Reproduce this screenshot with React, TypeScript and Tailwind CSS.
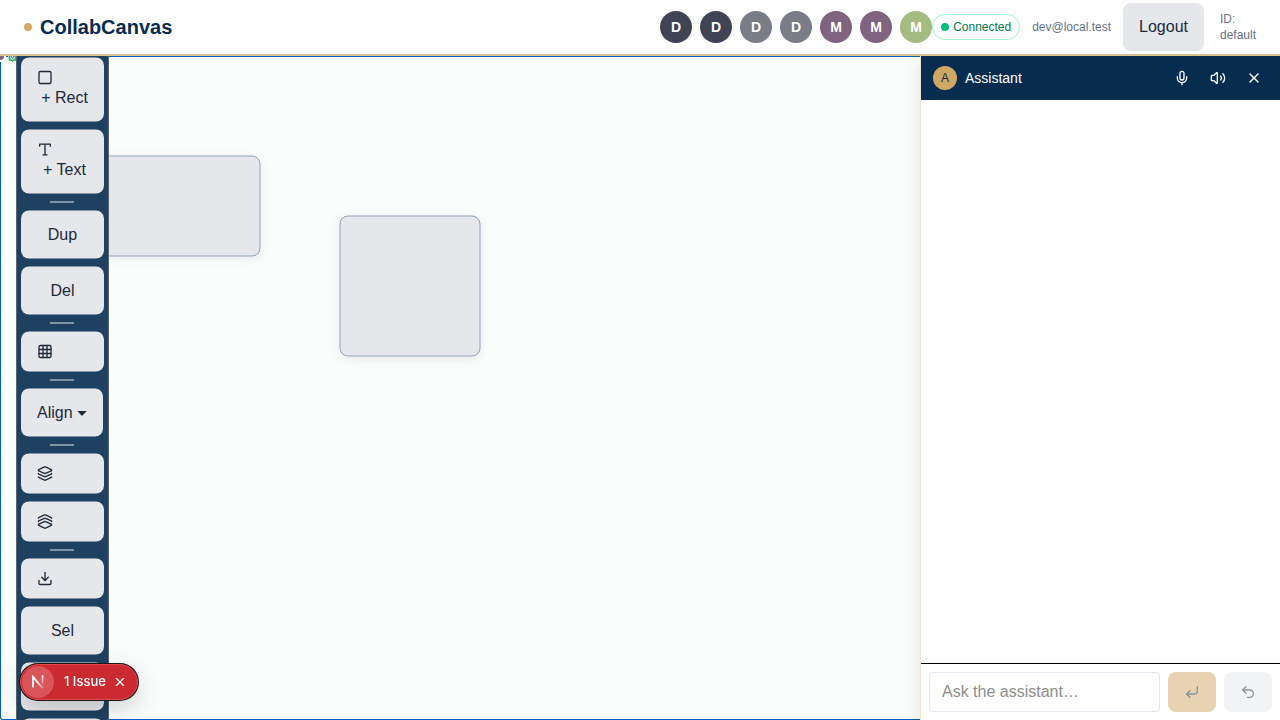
import type { ReactNode } from 'react';
import {
  CornerDownLeft,
  Download,
  Grid3x3,
  Layers,
  Mic,
  MousePointer2,
  Square,
  Undo2,
  Volume2,
  X,
} from 'lucide-react';

const peers = [
  { initial: 'D', tone: 'bg-[#404353]' },
  { initial: 'D', tone: 'bg-[#404353]' },
  { initial: 'D', tone: 'bg-[#7a7c87]' },
  { initial: 'D', tone: 'bg-[#7a7c87]' },
  { initial: 'M', tone: 'bg-[#80647f]' },
  { initial: 'M', tone: 'bg-[#80647f]' },
  { initial: 'M', tone: 'bg-[#a4bb82]' },
];

function TextIcon() {
  return (
    <svg
      width="16"
      height="16"
      viewBox="0 0 24 24"
      fill="none"
      stroke="currentColor"
      strokeWidth="2"
      strokeLinecap="round"
      strokeLinejoin="round"
      aria-hidden="true"
    >
      <path d="M4 7V4h16v3M9 20h6M12 4v16" />
    </svg>
  );
}

function Header() {
  return (
    <header className="z-20 flex shrink-0 items-center justify-between border-b-2 border-[#dcc193] bg-white px-6 py-[3px]">
      <div className="flex items-center gap-2">
        <span className="size-2 rounded-full bg-[#d0a864]" />
        <h1 className="text-xl font-bold text-[#072c4f]">CollabCanvas</h1>
      </div>
      <div className="flex items-center">
        <ul className="flex gap-2">
          {peers.map((peer, i) => (
            <li
              key={i}
              className={`flex size-8 items-center justify-center rounded-full text-sm font-bold text-white ${peer.tone}`}
            >
              {peer.initial}
            </li>
          ))}
        </ul>
        <div className="flex items-center gap-1 rounded-full border border-[#a4f4cf] px-2 py-1 text-xs text-[#007a55]">
          <span className="size-2 rounded-full bg-[#00bc7d]" />
          Connected
        </div>
        <span className="ml-3 text-xs text-[#62748e]">dev@local.test</span>
        <button type="button" className="ml-3 rounded-lg bg-gray-200 px-4 py-3 text-base text-gray-800">
          Logout
        </button>
        <div className="ml-4 w-9 text-xs text-gray-500">ID: default</div>
      </div>
    </header>
  );
}

function ToolButton({ label, children }: { label?: string; children?: ReactNode }) {
  return (
    <button
      type="button"
      aria-label={label}
      className="w-[83px] rounded-lg bg-gray-200 px-4 py-3 text-center text-base text-gray-800"
    >
      {children}
    </button>
  );
}

function Divider() {
  return <div className="ml-[29px] h-px w-6 shrink-0 bg-[#dfe6ec]" />;
}

function Toolbar() {
  return (
    <nav
      aria-label="Tools"
      className="absolute top-1/2 left-4 flex -translate-y-1/2 flex-col gap-2 border border-[#57666f] bg-[#1f4161] p-1"
    >
      <ToolButton label="Select">
        <MousePointer2 size={16} />
      </ToolButton>
      <ToolButton>
        <Square size={16} />
        <span className="ml-1">+ Rect</span>
      </ToolButton>
      <ToolButton>
        <TextIcon />
        <span className="ml-1">+ Text</span>
      </ToolButton>
      <Divider />
      <ToolButton>Dup</ToolButton>
      <ToolButton>Del</ToolButton>
      <Divider />
      <ToolButton label="Grid">
        <Grid3x3 size={16} />
      </ToolButton>
      <Divider />
      <button
        type="button"
        className="flex items-center gap-1 self-start rounded-lg bg-gray-200 px-4 py-3 text-base text-gray-800"
      >
        Align
        <svg width="10" height="8" viewBox="0 0 10 8" aria-hidden="true">
          <path d="M0.3 2.6h9.4L5 7.4z" fill="currentColor" />
        </svg>
      </button>
      <Divider />
      <ToolButton label="Bring to front">
        <Layers size={16} />
      </ToolButton>
      <ToolButton label="Send to back">
        <Layers size={16} className="rotate-180" />
      </ToolButton>
      <Divider />
      <ToolButton label="Export">
        <Download size={16} />
      </ToolButton>
      <ToolButton>Sel</ToolButton>
      <ToolButton label="Undo">
        <span className="block h-6" />
      </ToolButton>
      <ToolButton label="Redo">
        <span className="block h-6" />
      </ToolButton>
    </nav>
  );
}

function Board() {
  return (
    <section aria-label="Canvas" className="relative min-w-0 flex-1 overflow-hidden bg-[#fbfcfc]">
      <svg className="absolute inset-0 size-full" aria-hidden="true">
        <g
          fill="#e5e7eb"
          stroke="#94a3b8"
          strokeWidth="1"
          className="drop-shadow-[0_2px_4px_rgba(0,0,0,0.08)]"
        >
          <rect x="100" y="100" width="160" height="100" rx="8" />
          <rect x="340" y="160" width="140" height="140" rx="8" />
        </g>
      </svg>
      <div className="absolute inset-0 rounded-bl-[3px] border border-r-0 border-[#005fcc]" />
      <svg className="absolute top-0 left-0" width="16" height="6" aria-hidden="true">
        <rect width="6" height="6" fill="#fff" />
        <circle cx="0" cy="0" r="4" fill="#80647f" />
        <circle cx="12" cy="1" r="4" fill="#cfe9dd" />
        <path d="M9.5 0v4h1.5l1.5 1 1-1h2V0" fill="none" stroke="#22b35a" strokeWidth="1.5" />
        <path d="M11 0l1.5 2.5L14 0" fill="none" stroke="#626b8c" strokeWidth="1" />
      </svg>
      <Toolbar />
    </section>
  );
}

function Assistant() {
  return (
    <aside className="z-10 flex w-[360px] shrink-0 flex-col border-l border-[#f1e5d0] bg-white shadow-[0_4px_16px_rgba(0,0,0,0.1)]">
      <div className="flex h-11 shrink-0 items-center justify-between bg-[#072c4f] pr-2.5 pl-3 text-white">
        <div className="flex items-center gap-2">
          <span className="flex size-6 items-center justify-center rounded-full bg-[#d0a864] text-xs text-[#072c4f]">
            A
          </span>
          <h2 className="text-sm">Assistant</h2>
        </div>
        <div className="flex gap-1">
          <button type="button" aria-label="Voice input" className="flex h-7 w-8 items-center justify-center">
            <Mic size={16} />
          </button>
          <button type="button" aria-label="Sound" className="flex h-7 w-8 items-center justify-center">
            <Volume2 size={16} />
          </button>
          <button type="button" aria-label="Close assistant" className="flex h-7 w-8 items-center justify-center">
            <X size={16} />
          </button>
        </div>
      </div>
      <div className="flex-1" />
      <form className="flex gap-2 border-t border-black p-2">
        <input
          type="text"
          aria-label="Ask the assistant"
          placeholder="Ask the assistant…"
          className="h-10 min-w-0 flex-1 rounded border border-slate-200 px-3 text-base placeholder:text-[#8e8e8e]"
        />
        <button
          type="button"
          aria-label="Send"
          className="flex h-10 w-12 items-center justify-center rounded-lg bg-[#e7d3b1] text-[#8395a7]"
        >
          <CornerDownLeft size={16} />
        </button>
        <button
          type="button"
          aria-label="Undo last request"
          className="flex h-10 w-12 items-center justify-center rounded-lg bg-[#f2f3f5] text-[#8f939b]"
        >
          <Undo2 size={16} />
        </button>
      </form>
    </aside>
  );
}

function IssueBadge() {
  return (
    <div className="fixed bottom-5 left-5 z-30 flex h-9 items-center rounded-full border border-[#e5484d] bg-[#ca2a30] pr-2.5 pl-px font-['Inter',sans-serif] text-[13px] font-medium text-white shadow-[0_0_0_1px_#171717,0_8px_24px_rgba(0,0,0,0.18)]">
      <span className="flex size-8 items-center justify-center rounded-full bg-[#d9555a]">
        <svg width="14" height="14" viewBox="0 0 14 14" fill="none" aria-hidden="true">
          <defs>
            <linearGradient id="stem" x1="0" y1="1" x2="0" y2="10" gradientUnits="userSpaceOnUse">
              <stop stopColor="#fff" />
              <stop offset="1" stopColor="#fff" stopOpacity="0.1" />
            </linearGradient>
            <linearGradient id="slash" x1="7" y1="7" x2="12" y2="13" gradientUnits="userSpaceOnUse">
              <stop stopColor="#fff" />
              <stop offset="1" stopColor="#fff" stopOpacity="0.2" />
            </linearGradient>
          </defs>
          <path d="M2 12.5V1.8L11.6 13.4" stroke="url(#slash)" strokeWidth="1.8" />
          <path d="M11.5 1v9.4h0.2V1z" stroke="url(#stem)" strokeWidth="1.4" />
        </svg>
      </span>
      <button type="button" className="ml-2.5">
        1 Issue
      </button>
      <button type="button" aria-label="Dismiss" className="ml-[7px]">
        <X size={14} strokeWidth={2} />
      </button>
    </div>
  );
}

export default function App() {
  return (
    <div className="flex h-screen flex-col bg-white font-['Liberation_Sans',Arial,sans-serif]">
      <Header />
      <main className="flex min-h-0 flex-1">
        <Board />
        <Assistant />
      </main>
      <IssueBadge />
    </div>
  );
}
